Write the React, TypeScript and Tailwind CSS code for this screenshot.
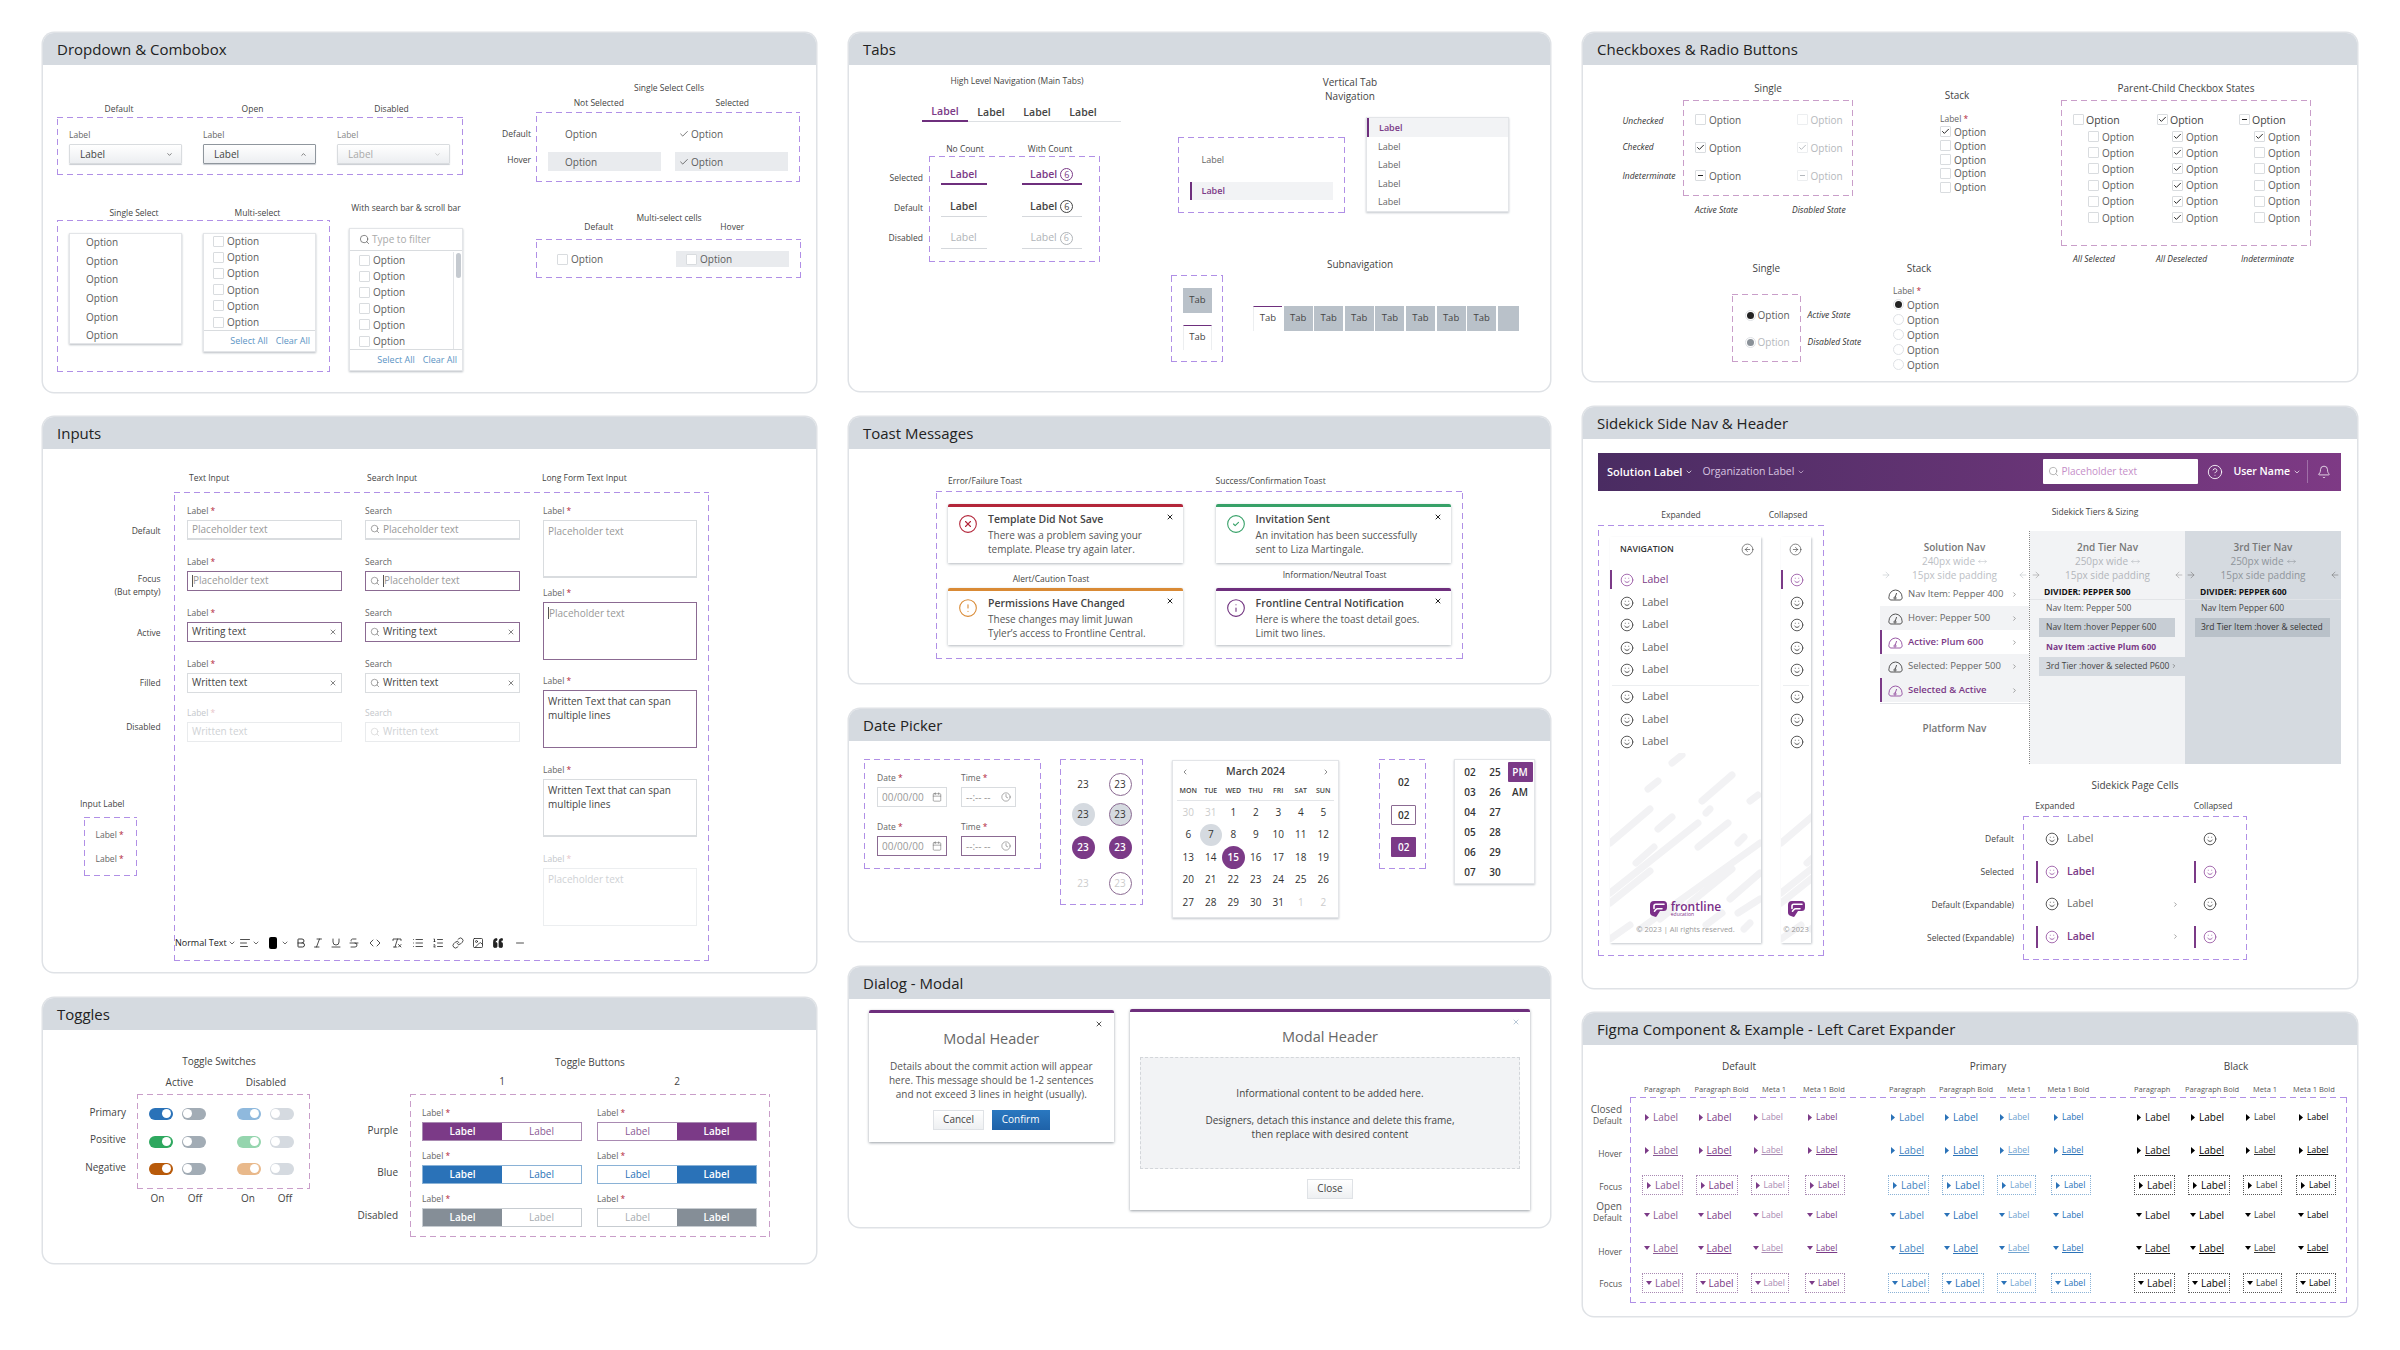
import React from "react";
import {
  AlignLeft, Bold, Bell, Calendar, Check, ChevronDown, ChevronLeft, ChevronRight, ChevronUp, CircleAlert,
  CircleArrowLeft, CircleArrowRight, CircleCheck, CircleHelp, CircleX, Clock, Code, Image, Info, Italic, Link,
  List, ListOrdered, Minus, MoveHorizontal, ArrowLeft, ArrowRight, Quote, RemoveFormatting, Search, Smile,
  Strikethrough, Underline, X,
} from "lucide-react";

const dash = "box-border border border-transparent bg-no-repeat [background-origin:border-box] [background-clip:border-box] bg-[repeating-linear-gradient(90deg,#b08fe6_0_6px,transparent_6px_10px),repeating-linear-gradient(90deg,#b08fe6_0_6px,transparent_6px_10px),repeating-linear-gradient(0deg,#b08fe6_0_6px,transparent_6px_10px),repeating-linear-gradient(0deg,#b08fe6_0_6px,transparent_6px_10px)] bg-[length:100%_1px,100%_1px,1px_100%,1px_100%] bg-[position:0_0,0_100%,0_0,100%_0]";
const dashPink = "box-border border border-transparent bg-no-repeat [background-origin:border-box] [background-clip:border-box] bg-[repeating-linear-gradient(90deg,#c99ec9_0_6px,transparent_6px_10px),repeating-linear-gradient(90deg,#c99ec9_0_6px,transparent_6px_10px),repeating-linear-gradient(0deg,#c99ec9_0_6px,transparent_6px_10px),repeating-linear-gradient(0deg,#c99ec9_0_6px,transparent_6px_10px)] bg-[length:100%_1px,100%_1px,1px_100%,1px_100%] bg-[position:0_0,0_100%,0_0,100%_0]";
const cap = "text-[8.5px] leading-[12px] text-[#444] whitespace-nowrap";
const capC = "text-[8.5px] leading-[12px] text-[#444] whitespace-nowrap text-center";
const head = "text-[10px] leading-[13px] text-[#444] whitespace-nowrap text-center";
const opt = "text-[10px] leading-[14px] text-[#5c5c5c] whitespace-nowrap";
const ital = "text-[8.5px] leading-[12px] italic text-[#333] whitespace-nowrap";

function Panel({ title, cls, children }: { title: string; cls: string; children: React.ReactNode }) {
  return (
    <section className={"w-full bg-white rounded-[11px] overflow-hidden ring-[1.5px] ring-[#dfe2e6] " + cls}>
      <div className="h-[32px] bg-[#d5dae0] flex items-center pl-[14px] pt-[1px] text-[15px] text-[#222] whitespace-nowrap">{title}</div>
      {children}
    </section>
  );
}

function Cb({ s, dim }: { s?: "c" | "i"; dim?: boolean }) {
  return (
    <span className={"w-[11px] h-[11px] shrink-0 bg-white rounded-[1px] border flex items-center justify-center " + (dim ? "border-[#eceef0]" : "border-[#d9dcdf]")}>
      {s === "c" && <Check size={9} strokeWidth={2.6} color={dim ? "#b4b8bd" : "#222"} />}
      {s === "i" && <span className={"w-[5px] h-[1.5px] " + (dim ? "bg-[#b4b8bd]" : "bg-[#222]")} />}
    </span>
  );
}

function CbOpt({ s, gap, bold, dim }: { s?: "c" | "i"; gap?: string; bold?: boolean; dim?: boolean }) {
  return (
    <div className={"flex items-center " + (gap || "gap-[3px]")}>
      <Cb s={s} dim={dim} />
      <span className={dim ? "text-[10px] leading-[14px] text-[#b5b8bc]" : bold ? "text-[10.5px] leading-[14px] text-[#444]" : opt}>Option</span>
    </div>
  );
}

function Sel({ label, icon, dim }: { label: string; icon: "d" | "u"; dim?: boolean }) {
  return (
    <div className="w-[113px]">
      <div className={"text-[8.5px] leading-[12px] mb-[3px] " + (dim ? "text-[#888]" : "text-[#666]")}>{label}</div>
      <div className={"h-[20px] flex items-center justify-between pl-[10px] pr-[8px] bg-gradient-to-b from-white to-[#eceef1] border rounded-[1px] shadow-[0_1px_1px_#c9cdd2] " + (icon === "u" ? "border-[#8f969d]" : "border-[#d9dcdf]")}>
        <span className={"text-[10px] " + (dim ? "text-[#aaa]" : "text-[#444]")}>{label}</span>
        {icon === "d" ? <ChevronDown size={7} strokeWidth={2.5} color={dim ? "#bbb" : "#555"} /> : <ChevronUp size={7} strokeWidth={2.5} color="#555" />}
      </div>
    </div>
  );
}

function SelectLinks() {
  return (
    <div className="flex items-center justify-end gap-[8px] pr-[5px] flex-1 border-t border-[#d9dcdf]">
      <span className="text-[9px] text-[#5b94c4]">Select All</span>
      <span className="text-[9px] text-[#5b94c4]">Clear All</span>
    </div>
  );
}

function Dropdown() {
  const single = [0, 1, 2, 3, 4, 5];
  return (
    <Panel title="Dropdown & Combobox" cls="h-[359px]">
      <div className="flex items-start">
        <div className="ml-[14px] w-[406px] shrink-0">
          <div className="flex mt-[38px]">
            <div className={capC + " w-[124px]"}>Default</div>
            <div className={capC + " w-[143px]"}>Open</div>
            <div className={capC + " w-[135px]"}>Disabled</div>
          </div>
          <div className={dash + " mt-[2px] h-[58px] pl-[11px] pt-[11px] flex gap-[21px]"}>
            <Sel label="Label" icon="d" />
            <Sel label="Label" icon="u" />
            <Sel label="Label" icon="d" dim />
          </div>
          <div className="flex items-start mt-[27px]">
            <div className="w-[272.5px] shrink-0">
              <div className="flex mt-[5px]">
                <div className={capC + " w-[154px]"}>Single Select</div>
                <div className={capC + " w-[93px]"}>Multi-select</div>
              </div>
              <div className={dash + " mt-[1px] h-[152px] pl-[11px] pt-[12px] flex gap-[21px] items-start"}>
                <div className="w-[113px] h-[111px] border border-[#e3e5e8] shadow-[0_1px_2px_#b9bec4] overflow-hidden">
                  {single.map((i) => (
                    <div key={i} className={opt + " h-[18.6px] flex items-center pl-[16px] " + (i === 0 ? "-mt-[1px]" : "")}>Option</div>
                  ))}
                </div>
                <div className="w-[113px] h-[119px] border border-[#e3e5e8] shadow-[0_1px_2px_#b9bec4] flex flex-col">
                  {single.map((i) => (
                    <div key={i} className={"h-[16.2px] flex items-center pl-[9px] " + (i === 0 ? "-mt-[1px]" : "")}><CbOpt /></div>
                  ))}
                  <SelectLinks />
                </div>
              </div>
            </div>
            <div className="ml-[19.5px] w-[114px] shrink-0">
              <div className={capC}>With search bar & scroll bar</div>
              <div className="mt-[14px] h-[143px] border border-[#e3e5e8] shadow-[0_1px_2px_#b9bec4] flex flex-col">
                <div className="h-[22px] shrink-0 flex items-center gap-[2px] pl-[9px] border-b border-[#d9dcdf]">
                  <Search size={11} strokeWidth={1.5} color="#555" />
                  <span className="text-[10px] text-[#aaa] whitespace-nowrap">Type to filter</span>
                </div>
                <div className="flex h-[98px] shrink-0 pt-[1px]">
                  <div className="flex-1">
                    {single.map((i) => (
                      <div key={i} className="h-[16.2px] flex items-center pl-[9px]"><CbOpt /></div>
                    ))}
                  </div>
                  <div className="w-[9px] border-l border-[#e3e5e8] pl-[2px] pt-[1px]">
                    <div className="w-[5px] h-[25px] rounded-[3px] bg-[#c5cad0]" />
                  </div>
                </div>
                <SelectLinks />
              </div>
            </div>
          </div>
        </div>
        <div className="ml-[28px] w-[312px] shrink-0">
          <div className={capC + " mt-[17px] pl-[45px] w-[311px]"}>Single Select Cells</div>
          <div className="flex pl-[45px] mt-[3px]">
            <div className={capC + " w-[126px]"}>Not Selected</div>
            <div className={capC + " w-[142px]"}>Selected</div>
          </div>
          <div className="flex mt-[3px]">
            <div className="w-[40px] mr-[5px] pt-[16px] text-right">
              <div className={cap}>Default</div>
              <div className={cap + " mt-[14px]"}>Hover</div>
            </div>
            <div className={dash + " w-[264px] h-[70px] pl-[11px] pt-[11.5px]"}>
              <div className="grid grid-cols-[113px_113px] gap-x-[14px] gap-y-[8.5px]">
                <div className={opt + " h-[19px] flex items-center pl-[17px]"}>Option</div>
                <div className={opt + " h-[19px] flex items-center pl-[4px] gap-[2px]"}><Check size={10} strokeWidth={1.6} color="#333" />Option</div>
                <div className={opt + " h-[19px] flex items-center pl-[17px] bg-[#e9ebee]"}>Option</div>
                <div className={opt + " h-[19px] flex items-center pl-[4px] gap-[2px] bg-[#e9ebee]"}><Check size={10} strokeWidth={1.6} color="#333" />Option</div>
              </div>
            </div>
          </div>
          <div className={capC + " mt-[30px] pl-[45px] w-[311px]"}>Multi-select cells</div>
          <div className="flex pl-[45px] mt-[-3px]">
            <div className={capC + " w-[126px]"}>Default</div>
            <div className={capC + " w-[142px]"}>Hover</div>
          </div>
          <div className={dash + " ml-[45px] mt-[6px] w-[265px] h-[39px] pt-[11px] flex"}>
            <div className="w-[139px] h-[16px] pl-[20px] flex items-center"><CbOpt /></div>
            <div className="w-[113px] h-[16px] pl-[10px] flex items-center bg-[#e9ebee]"><CbOpt /></div>
          </div>
        </div>
      </div>
    </Panel>
  );
}

function FieldLabel({ dim, text = "Label", star = true }: { dim?: boolean; text?: string; star?: boolean }) {
  return (
    <div className={"text-[8.5px] leading-[12px] whitespace-nowrap " + (dim ? "text-[#c4c7cb]" : "text-[#666]")}>
      {text}
      {star && <span className={dim ? "text-[#e8c4c8]" : "text-[#b3263a]"}> *</span>}
    </div>
  );
}

function Inp({ search, text, tone, clear, cursor }: { search?: boolean; text: string; tone: "def" | "foc" | "fil" | "dis"; clear?: boolean; cursor?: boolean }) {
  const b =
    tone === "foc"
      ? "border-[1.5px] border-[#8b6a92]"
      : tone === "def"
        ? "border border-[#d9dcdf] border-b-2"
        : tone === "fil"
          ? "border border-[#d9dcdf]"
          : "border border-[#e9ebed]";
  const c = tone === "dis" ? "text-[#cfd2d5]" : clear ? "text-[#444]" : "text-[#999]";
  return (
    <div className={"h-[20px] flex items-center pl-[4px] pr-[4px] " + b}>
      {search && <Search size={10} strokeWidth={1.4} color={tone === "dis" ? "#ccc" : "#666"} className="mr-[3px] shrink-0" />}
      {cursor && <span className="w-px h-[12px] bg-[#555]" />}
      <span className={"text-[10px] whitespace-nowrap flex-1 " + c}>{text}</span>
      {clear && <X size={8} strokeWidth={1.8} color="#333" />}
    </div>
  );
}

function Area({ lines, tone, cursor }: { lines: string[]; tone: "def" | "foc" | "dis" | "txt"; cursor?: boolean }) {
  const b = tone === "foc" ? "border-[1.5px] border-[#8b6a92]" : tone === "dis" ? "border border-[#eceef0]" : "border border-[#d9dcdf] border-b-2";
  const c = tone === "dis" ? "text-[#cfd2d5]" : tone === "txt" || lines.length > 1 ? "text-[#444]" : "text-[#999]";
  return (
    <div className={"h-[58px] pl-[4px] pt-[3px] " + b}>
      {lines.map((l) => (
        <div key={l} className={"text-[10px] leading-[14px] whitespace-nowrap flex items-center " + c}>
          {cursor && <span className="w-px h-[12px] bg-[#555]" />}
          {l}
        </div>
      ))}
    </div>
  );
}

function InputCol({ search, label }: { search?: boolean; label?: string }) {
  return (
    <div className="w-[155px] shrink-0">
      <FieldLabel text={label} star={!search} />
      <div className="mt-[2.5px]"><Inp search={search} text="Placeholder text" tone="def" /></div>
      <div className="mt-[16.5px]"><FieldLabel text={label} star={!search} /></div>
      <div className="mt-[2.5px]"><Inp search={search} text="Placeholder text" tone="foc" cursor /></div>
      <div className="mt-[16.5px]"><FieldLabel text={label} star={!search} /></div>
      <div className="mt-[2.5px]"><Inp search={search} text="Writing text" tone="foc" clear /></div>
      <div className="mt-[16.5px]"><FieldLabel text={label} star={!search} /></div>
      <div className="mt-[2.5px]"><Inp search={search} text="Written text" tone="fil" clear /></div>
      <div className="mt-[14px]"><FieldLabel dim text={label} star={!search} /></div>
      <div className="mt-[3px]"><Inp search={search} text="Written text" tone="dis" /></div>
    </div>
  );
}

function Inputs() {
  const long = ["Written Text that can span", "multiple lines"];
  return (
    <Panel title="Inputs" cls="h-[555px]">
      <div className="flex items-start">
        <div className="w-[131px] shrink-0">
          <div className="w-[117.6px] pt-[75px] text-right text-[8.5px] leading-[13px] text-[#444]">
            <div>Default</div>
            <div className="mt-[35px]">Focus</div>
            <div>(But empty)</div>
            <div className="mt-[28px]">Active</div>
            <div className="mt-[37px]">Filled</div>
            <div className="mt-[31px]">Disabled</div>
          </div>
          <div className={cap + " mt-[65px] ml-[37px]"}>Input Label</div>
          <div className={dash + " mt-[6.5px] ml-[40.5px] w-[53px] h-[59.5px] pl-[11px] pt-[11px]"}>
            <FieldLabel />
            <div className="mt-[12px]"><FieldLabel /></div>
          </div>
        </div>
        <div className="pt-[23px]">
          <div className={cap + " flex pl-[15px]"}>
            <div className="w-[178px]">Text Input</div>
            <div className="w-[175px]">Search Input</div>
            <div>Long Form Text Input</div>
          </div>
          <div className={dash + " mt-[8px] w-[535px] h-[469px]"}>
            <div className="flex items-start gap-[23px] pl-[12px] pt-[12px]">
              <InputCol />
              <InputCol search label="Search" />
              <div className="w-[154px] shrink-0">
                <FieldLabel />
                <div className="mt-[2.5px]"><Area lines={["Placeholder text"]} tone="def" /></div>
                <div className="mt-[9.5px]"><FieldLabel /></div>
                <div className="mt-[2.5px]"><Area lines={["Placeholder text"]} tone="foc" cursor /></div>
                <div className="mt-[15.5px]"><FieldLabel /></div>
                <div className="mt-[2.5px]"><Area lines={long} tone="foc" /></div>
                <div className="mt-[16.5px]"><FieldLabel /></div>
                <div className="mt-[2.5px]"><Area lines={long} tone="txt" /></div>
                <div className="mt-[16.5px]"><FieldLabel dim /></div>
                <div className="mt-[2.5px]"><Area lines={["Placeholder text"]} tone="dis" /></div>
              </div>
            </div>
            <div className="flex items-center h-[14px] mt-[10.5px] text-[#222]">
              <span className="text-[9px] w-[50px] whitespace-nowrap">Normal Text</span>
              <ChevronDown size={8} className="ml-[3px]" />
              <AlignLeft size={12} strokeWidth={1.6} className="ml-[3px]" />
              <ChevronDown size={8} className="ml-[1px]" />
              <span className="w-[8px] h-[12px] bg-black rounded-[2px] ml-[9px]" />
              <ChevronDown size={8} className="ml-[4px]" />
              <Bold size={12} strokeWidth={1.8} className="ml-[6px]" />
              <Italic size={12} strokeWidth={1.6} className="ml-[5px]" />
              <Underline size={12} strokeWidth={1.6} className="ml-[5.6px]" />
              <Strikethrough size={12} strokeWidth={1.6} className="ml-[6.4px]" />
              <Code size={12} strokeWidth={1.6} className="ml-[9px]" />
              <RemoveFormatting size={12} strokeWidth={1.6} className="ml-[10px]" />
              <List size={12} strokeWidth={1.6} className="ml-[9px]" />
              <ListOrdered size={12} strokeWidth={1.6} className="ml-[8px]" />
              <Link size={12} strokeWidth={1.6} className="ml-[8.5px]" />
              <Image size={12} strokeWidth={1.6} className="ml-[8px]" />
              <Quote size={12} strokeWidth={1.6} fill="#222" className="ml-[7.5px] rotate-180" />
              <Minus size={12} strokeWidth={1.6} className="ml-[10px]" />
            </div>
          </div>
        </div>
      </div>
    </Panel>
  );
}

function Sw({ on, bg }: { on?: boolean; bg: string }) {
  return (
    <div className={"w-[24px] h-[12px] rounded-full flex items-center px-[1.5px] " + bg + (on ? " justify-end" : " justify-start")}>
      <span className="w-[9px] h-[9px] rounded-full bg-white" />
    </div>
  );
}

function ToggleBtn({ a, b, first }: { a: string; b: string; first: boolean }) {
  return (
    <div className={"h-[19px] w-[160px] flex text-[10px] border " + b}>
      <div className={"w-1/2 flex items-center justify-center " + (first ? a : "bg-white")}><BtnText on={first} a={a} /></div>
      <div className={"w-1/2 flex items-center justify-center " + (!first ? a : "bg-white")}><BtnText on={!first} a={a} /></div>
    </div>
  );
}
function BtnText({ on, a }: { on: boolean; a: string }) {
  const off = a.includes("7b3a87") ? "text-[#8a5a94]" : a.includes("2a72b8") ? "text-[#2a72b8]" : "text-[#a6abb0]";
  return <span className={on ? "text-white font-semibold" : off}>Label</span>;
}

function Toggles() {
  const rows = [
    ["bg-[#7b3a87]", "border-[#a98ab2]"],
    ["bg-[#2a72b8]", "border-[#8ab2d6]"],
    ["bg-[#858e97]", "border-[#c7ccd1]"],
  ];
  return (
    <Panel title="Toggles" cls="h-[265px]">
      <div className="flex items-start">
        <div className="w-[267px] shrink-0 pt-[25px]">
          <div className={head + " ml-[93px] w-[166px]"}>Toggle Switches</div>
          <div className="flex ml-[93px] mt-[8px]">
            <div className={head + " w-[87px]"}>Active</div>
            <div className={head + " w-[86px]"}>Disabled</div>
          </div>
          <div className="flex mt-[4.5px]">
            <div className="w-[83px] text-right text-[10px] leading-[13px] text-[#444] pt-[12.5px]">
              <div>Primary</div>
              <div className="mt-[14px]">Positive</div>
              <div className="mt-[15px]">Negative</div>
            </div>
            <div className={dashPink + " ml-[10.6px] w-[173px] h-[95px] pl-[11.4px] pt-[13px]"}>
              <div className="flex"><Sw on bg="bg-[#2a72b8]" /><div className="ml-[9px]"><Sw bg="bg-[#a2acb5]" /></div><div className="ml-[31px]"><Sw on bg="bg-[#8fb9dd]" /></div><div className="ml-[9px]"><Sw bg="bg-[#d5dae0]" /></div></div>
              <div className="flex mt-[16px]"><Sw on bg="bg-[#2ea85f]" /><div className="ml-[9px]"><Sw bg="bg-[#a2acb5]" /></div><div className="ml-[31px]"><Sw on bg="bg-[#95d5ae]" /></div><div className="ml-[9px]"><Sw bg="bg-[#d5dae0]" /></div></div>
              <div className="flex mt-[15px]"><Sw on bg="bg-[#b85a0a]" /><div className="ml-[9px]"><Sw bg="bg-[#a2acb5]" /></div><div className="ml-[31px]"><Sw on bg="bg-[#e9b98b]" /></div><div className="ml-[9px]"><Sw bg="bg-[#d5dae0]" /></div></div>
            </div>
          </div>
          <div className="flex ml-[104.5px] mt-[3.5px]">
            <div className={head + " w-[20px]"}>On</div>
            <div className={head + " w-[20px] ml-[17.5px]"}>Off</div>
            <div className={head + " w-[20px] ml-[33px]"}>On</div>
            <div className={head + " w-[20px] ml-[17px]"}>Off</div>
          </div>
        </div>
        <div className="pt-[26px]">
          <div className={head + " ml-[100px] w-[360px]"}>Toggle Buttons</div>
          <div className="flex ml-[112px] mt-[6px]">
            <div className={head + " w-[160px]"}>1</div>
            <div className={head + " w-[160px] ml-[15px]"}>2</div>
          </div>
          <div className="flex mt-[5.5px]">
            <div className="w-[88px] text-right text-[10px] leading-[13px] text-[#444] pt-[30.5px]">
              <div>Purple</div>
              <div className="mt-[29px]">Blue</div>
              <div className="mt-[30px]">Disabled</div>
            </div>
            <div className={dashPink + " ml-[12px] w-[360px] h-[143px] pl-[11px] pt-[12px]"}>
              {rows.map(([a, b], i) => (
                <div key={a} className={"flex gap-[15px] " + (i ? "mt-[9px]" : "")}>
                  <div><FieldLabel /><div className="mt-[3px]"><ToggleBtn a={a} b={b} first /></div></div>
                  <div><FieldLabel /><div className="mt-[3px]"><ToggleBtn a={a} b={b} first={false} /></div></div>
                </div>
              ))}
            </div>
          </div>
        </div>
      </div>
    </Panel>
  );
}

function Count({ c }: { c: string }) {
  return <span className={"w-[13px] h-[13px] rounded-full border flex items-center justify-center text-[9px] ml-[3px] font-normal " + c}>6</span>;
}

function Tabs() {
  return (
    <Panel title="Tabs" cls="h-[358px]">
      <div className="flex items-start">
        <div className="w-[322px] shrink-0 pt-[10px]">
          <div className={capC + " ml-[73px] w-[190px]"}>High Level Navigation (Main Tabs)</div>
          <div className="ml-[73px] w-[199px] mt-[17px] flex border-b-[1.5px] border-[#dde0e3] text-[10.5px] font-semibold text-[#444]">
            <div className="w-[46px] h-[18px] flex items-center justify-center border-b-2 border-[#6e2f7d] -mb-[1.5px] text-[#7b3a87]">Label</div>
            <div className="w-[46px] h-[17px] flex items-center justify-center">Label</div>
            <div className="w-[46px] h-[17px] flex items-center justify-center">Label</div>
            <div className="w-[46px] h-[17px] flex items-center justify-center">Label</div>
          </div>
          <div className="flex ml-[79px] mt-[21px]">
            <div className={capC + " w-[74px]"}>No Count</div>
            <div className={capC + " w-[96px]"}>With Count</div>
          </div>
          <div className="flex mt-[1px]">
            <div className={cap + " w-[74px] text-right pt-[16px]"}>
              <div>Selected</div>
              <div className="mt-[18px]">Default</div>
              <div className="mt-[18px]">Disabled</div>
            </div>
            <div className={dash + " ml-[5.6px] w-[171.4px] h-[106px] pl-[11px] pt-[9px] text-[10.5px] font-semibold"}>
              <div className="flex gap-[35px]">
                <div className="w-[46px] h-[19px] flex items-center justify-center border-b-2 border-[#6e2f7d] text-[#7b3a87]">Label</div>
                <div className="w-[60px] h-[19px] flex items-center justify-center border-b-2 border-[#6e2f7d] text-[#7b3a87]">Label<Count c="border-[#7b3a87]" /></div>
              </div>
              <div className="flex gap-[35px] mt-[12px]">
                <div className="w-[46px] h-[20px] flex items-center justify-center border-b border-[#d5d8dc] text-[#444]">Label</div>
                <div className="w-[60px] h-[20px] flex items-center justify-center border-b border-[#d5d8dc] text-[#444]">Label<Count c="border-[#444]" /></div>
              </div>
              <div className="flex gap-[35px] mt-[11px]">
                <div className="w-[46px] h-[21px] flex items-center justify-center border-b border-[#d5d8dc] text-[#b0b4b8] font-normal">Label</div>
                <div className="w-[60px] h-[21px] flex items-center justify-center border-b border-[#d5d8dc] text-[#b0b4b8] font-normal">Label<Count c="border-[#b0b4b8]" /></div>
              </div>
            </div>
          </div>
        </div>
        <div className="pt-[10px]">
          <div className={head + " w-[358px] leading-[14px]"}>Vertical Tab<br />Navigation</div>
          <div className="flex items-start">
            <div className={dash + " ml-[6.5px] mt-[34px] w-[167px] h-[76px] pl-[11px] pt-[13px] text-[9px]"}>
              <div className="h-[18px] flex items-center pl-[12px] text-[#666]">Label</div>
              <div className="h-[18px] w-[143px] mt-[13px] flex items-center pl-[10px] border-l-2 border-[#6e2f7d] bg-[#f2f3f5] text-[#7b3a87] font-semibold">Label</div>
            </div>
            <div className="ml-[21.5px] mt-[14px] w-[142.5px] h-[95px] border border-[#e3e5e8] shadow-[0_1px_2px_#c4c8cd] text-[9px] text-[#666]">
              <div className="h-[19px] flex items-center pl-[10px] border-l-2 border-[#6e2f7d] bg-[#f2f3f5] text-[#7b3a87] font-semibold">Label</div>
              <div className="h-[18.6px] flex items-center pl-[11px]">Label</div>
              <div className="h-[18.6px] flex items-center pl-[11px]">Label</div>
              <div className="h-[18.6px] flex items-center pl-[11px]">Label</div>
              <div className="h-[18.6px] flex items-center pl-[11px]">Label</div>
            </div>
          </div>
          <div className={head + " mt-[45px] w-[378px]"}>Subnavigation</div>
          <div className="flex items-start mt-[3.5px]">
            <div className={dash + " w-[52px] h-[87px] pl-[11px] pt-[12px] text-[9.5px] text-[#444]"}>
              <div className="w-[29px] h-[25px] bg-[#b9c1c9] flex items-center justify-center">Tab</div>
              <div className="w-[29px] h-[25px] mt-[12px] border-t border-t-[#6e2f7d] border-x border-x-[#eceef0] flex items-center justify-center">Tab</div>
            </div>
            <div className="ml-[30px] mt-[31px] flex gap-[1.6px] text-[9.5px] text-[#444]">
              <div className="w-[29px] h-[25px] border-t border-t-[#6e2f7d] border-l border-l-[#eceef0] flex items-center justify-center">Tab</div>
              {[0, 1, 2, 3, 4, 5, 6].map((i) => (
                <div key={i} className="w-[29px] h-[25px] bg-[#b9c1c9] flex items-center justify-center">Tab</div>
              ))}
              <div className="w-[21.5px] h-[25px] bg-[#b9c1c9]" />
            </div>
          </div>
        </div>
      </div>
    </Panel>
  );
}

function Toast({ bar, icon, title, lines, h }: { bar: string; icon: React.ReactNode; title: string; lines: string[]; h: string }) {
  return (
    <div className={"w-[235px] bg-white border-t-[3px] rounded-t-[2px] shadow-[0_1px_3px_#b4b9bf] flex items-start " + bar + " " + h}>
      <div className="ml-[10px] mt-[7px] w-[20px] h-[20px] shrink-0">{icon}</div>
      <div className="ml-[10px] pt-[5px]">
        <div className="text-[10.5px] leading-[14px] font-semibold text-[#444] whitespace-nowrap">{title}</div>
        <div className="mt-[2px] text-[10px] leading-[14px] text-[#555] whitespace-nowrap">
          {lines.map((l) => (<div key={l}>{l}</div>))}
        </div>
      </div>
      <X size={8} strokeWidth={3} color="#222" className="ml-auto mr-[9px] mt-[6px] shrink-0" />
    </div>
  );
}

function Toasts() {
  return (
    <Panel title="Toast Messages" cls="h-[266px]">
      <div className="ml-[86.5px] pt-[26px]">
        <div className={cap + " flex pl-[12.5px]"}>
          <div className="w-[267.6px]">Error/Failure Toast</div>
          <div>Success/Confirmation Toast</div>
        </div>
        <div className={dash + " mt-[4px] w-[527.5px] h-[168px] pl-[11.5px] pt-[12px] flex gap-[32.6px]"}>
          <div>
            <Toast h="h-[59px]" bar="border-[#b3263a]" icon={<CircleX size={20} strokeWidth={1.3} color="#b3263a" />} title="Template Did Not Save" lines={["There was a problem saving your", "template. Please try again later."]} />
            <div className={capC + " mt-[10px] w-[206px]"}>Alert/Caution Toast</div>
            <div className="mt-[3px]">
              <Toast h="h-[57px]" bar="border-[#d98a35]" icon={<CircleAlert size={20} strokeWidth={1.3} color="#d98a35" />} title="Permissions Have Changed" lines={["These changes may limit Juwan", "Tyler’s access to Frontline Central."]} />
            </div>
          </div>
          <div>
            <Toast h="h-[59px]" bar="border-[#37a168]" icon={<CircleCheck size={20} strokeWidth={1.3} color="#37a168" />} title="Invitation Sent" lines={["An invitation has been successfully", "sent to Liza Martingale."]} />
            <div className={capC + " mt-[6px] w-[238px]"}>Information/Neutral Toast</div>
            <div className="mt-[7px]">
              <Toast h="h-[57px]" bar="border-[#6e2f7d]" icon={<Info size={20} strokeWidth={1.3} color="#6e2f7d" />} title="Frontline Central Notification" lines={["Here is where the toast detail goes.", "Limit two lines."]} />
            </div>
          </div>
        </div>
      </div>
    </Panel>
  );
}

function DateCell({ w, b, t, icon }: { w: string; b: string; t: string; icon: React.ReactNode }) {
  return (
    <div className={"h-[20px] flex items-center justify-between pl-[4px] pr-[4px] " + w + " " + b}>
      <span className="text-[10px] text-[#999] whitespace-nowrap">{t}</span>
      {icon}
    </div>
  );
}

function DateField({ b, first }: { b: string; first: boolean }) {
  return (
    <div className={"flex gap-[14px] " + (first ? "" : "mt-[14px]")}>
      <div>
        <FieldLabel text="Date" />
        <div className="mt-[3px]"><DateCell w="w-[70px]" b={b} t="00/00/00" icon={<Calendar size={10} strokeWidth={1.3} color="#666" />} /></div>
      </div>
      <div>
        <FieldLabel text="Time" />
        <div className="mt-[3px]"><DateCell w="w-[55px]" b={b} t="--:-- --" icon={<Clock size={10} strokeWidth={1.3} color="#666" />} /></div>
      </div>
    </div>
  );
}

function Circle({ c }: { c: string }) {
  return <div className={"w-[23px] h-[23px] rounded-full flex items-center justify-center text-[10px] " + c}>23</div>;
}

function DatePicker() {
  const cal = [
    ["30", "31", "1", "2", "3", "4", "5"],
    ["6", "7", "8", "9", "10", "11", "12"],
    ["13", "14", "15", "16", "17", "18", "19"],
    ["20", "21", "22", "23", "24", "25", "26"],
    ["27", "28", "29", "30", "31", "1", "2"],
  ];
  const hours = [["02", "25", "PM"], ["03", "26", "AM"], ["04", "27", ""], ["05", "28", ""], ["06", "29", ""], ["07", "30", ""]];
  return (
    <Panel title="Date Picker" cls="h-[232px]">
      <div className="flex items-start pl-[15px] pt-[18px]">
        <div className={dash + " w-[177px] h-[110px] pl-[12px] pt-[12px]"}>
          <DateField b="border border-[#d9dcdf]" first />
          <DateField b="border-[1.5px] border-[#8b6a92]" first={false} />
        </div>
        <div className={dash + " ml-[18.5px] w-[83.5px] h-[146px] pl-[11px] pt-[12.5px] grid grid-cols-[23px_23px] gap-x-[14px] content-start"}>
          <Circle c="text-[#333]" />
          <Circle c="border border-[#8b6a92] text-[#333]" />
          <Circle c="mt-[7px] bg-[#d5dae0] text-[#333]" />
          <Circle c="mt-[7px] bg-[#d5dae0] border border-[#8b6a92] text-[#333]" />
          <Circle c="mt-[10px] bg-[#7b3a87] text-white font-semibold" />
          <Circle c="mt-[10px] bg-[#7b3a87] text-white font-semibold" />
          <Circle c="mt-[13px] text-[#ccc]" />
          <Circle c="mt-[13px] border border-[#8b6a92] text-[#ccc]" />
        </div>
        <div className="ml-[29px] mt-[1px] w-[167px] h-[158px] border border-[#e3e5e8] shadow-[0_1px_2px_#c4c8cd]">
          <div className="mt-[3px] h-[16px] flex items-center justify-between px-[8px] text-[10.5px] font-semibold text-[#444]">
            <ChevronLeft size={8} color="#555" />
            March 2024
            <ChevronRight size={8} color="#555" />
          </div>
          <div className="mt-[5px] mx-[4px] grid grid-cols-[repeat(7,22.5px)] h-[16px] pb-[4px] text-[7px] leading-[12px] font-semibold text-center text-[#444] border-b border-[#e3e5e8]">
            {["MON", "TUE", "WED", "THU", "FRI", "SAT", "SUN"].map((d) => (<div key={d}>{d}</div>))}
          </div>
          <div className="mx-[4px] grid grid-cols-[repeat(7,22.5px)] text-[10px] text-[#333]">
            {cal.flatMap((r, i) =>
              r.map((d, j) => {
                const out = (i === 0 && j < 2) || (i === 4 && j > 4);
                const k = d === "7" ? "bg-[#d5dae0] rounded-full" : d === "15" ? "bg-[#7b3a87] rounded-full text-white font-semibold" : out ? "text-[#ccc]" : "";
                return <div key={i + "-" + j} className={"h-[22.5px] flex items-center justify-center " + k}>{d}</div>;
              })
            )}
          </div>
        </div>
        <div className={dash + " ml-[40px] w-[47px] h-[110px] pl-[11.4px] pt-[12px] text-[10px] font-semibold text-[#333]"}>
          <div className="w-[24.6px] h-[20px] flex items-center justify-center">02</div>
          <div className="w-[24.6px] h-[20px] mt-[13px] flex items-center justify-center border border-[#8b6a92] rounded-[1px]">02</div>
          <div className="w-[24.6px] h-[20px] mt-[12px] flex items-center justify-center bg-[#7b3a87] rounded-[1px] text-white">02</div>
        </div>
        <div className="ml-[28px] w-[81px] h-[125px] border border-[#e3e5e8] shadow-[0_1px_2px_#c4c8cd] pl-[2.5px] pt-[2px] grid grid-cols-[25px_25px_25px] content-start text-[10px] font-semibold text-[#333]">
          {hours.flat().map((t, i) => (
            <div key={i} className={"h-[20px] flex items-center justify-center " + (t === "PM" ? "bg-[#7b3a87] text-white rounded-[1px]" : "")}>{t}</div>
          ))}
        </div>
      </div>
    </Panel>
  );
}

function Btn({ t, w, blue }: { t: string; w: string; blue?: boolean }) {
  return (
    <div className={"h-[20px] flex items-center justify-center text-[10px] " + w + (blue ? " bg-gradient-to-b from-[#2a78c0] to-[#1f62a8] text-white" : " bg-gradient-to-b from-white to-[#eef0f2] border border-[#dfe2e6] text-[#444]")}>{t}</div>
  );
}

function Dialog() {
  return (
    <Panel title="Dialog - Modal" cls="h-[260px]">
      <div className="flex items-start pl-[20px]">
        <div className="mt-[11px] w-[244.6px] h-[132px] border-t-[3.5px] border-[#6e2f7d] rounded-t-[2px] shadow-[0_1px_3px_#9aa0a6] pt-[6.5px] text-center">
          <div className="flex justify-end pr-[10.6px]"><X size={8} strokeWidth={3} color="#555" /></div>
          <div className="mt-[1px] text-[14.5px] leading-[20px] text-[#666]">Modal Header</div>
          <div className="mt-[10px] text-[10px] leading-[14px] text-[#555] whitespace-nowrap">
            Details about the commit action will appear<br />here. This message should be 1-2 sentences<br />and not exceed 3 lines in height (usually).
          </div>
          <div className="mt-[9px] flex justify-center gap-[7.5px]">
            <Btn t="Cancel" w="w-[51px]" />
            <Btn t="Confirm" w="w-[58px]" blue />
          </div>
        </div>
        <div className="ml-[16.4px] mt-[10px] w-[400px] h-[201px] border-t-[3.5px] border-[#6e2f7d] rounded-t-[2px] shadow-[0_1px_3px_#9aa0a6] pt-[5.5px] text-center">
          <div className="flex justify-end pr-[10px]"><X size={8} strokeWidth={3} color="#b9c8d6" /></div>
          <div className="mt-[1px] text-[14.5px] leading-[20px] text-[#666]">Modal Header</div>
          <div className="mt-[10px] mx-[10px] h-[112px] bg-[#f2f3f5] border border-dashed border-[#d3d6da] pt-[28px] text-[10px] leading-[14px] text-[#444]">
            <div>Informational content to be added here.</div>
            <div className="mt-[13px]">Designers, detach this instance and delete this frame,<br />then replace with desired content</div>
          </div>
          <div className="mt-[10px] flex justify-center"><Btn t="Close" w="w-[46px]" /></div>
        </div>
      </div>
    </Panel>
  );
}

function Radio({ on, dim }: { on?: boolean; dim?: boolean }) {
  return (
    <span className="w-[11px] h-[11px] shrink-0 rounded-full border border-[#dfe2e6] flex items-center justify-center">
      {on && <span className={"w-[7px] h-[7px] rounded-full " + (dim ? "bg-[#8a9198]" : "bg-[#222]")} />}
    </span>
  );
}

function Checks() {
  const child = [0, 1, 2, 3, 4, 5];
  return (
    <Panel title="Checkboxes & Radio Buttons" cls="h-[348px]">
      <div className="flex items-start">
        <div className="w-[478px] shrink-0">
          <div className="flex items-start">
            <div className="w-[270px] shrink-0 pt-[16.5px]">
              <div className={head + " ml-[100px] w-[170px]"}>Single</div>
              <div className="flex mt-[5.5px]">
                <div className={ital + " w-[100px] pl-[39.5px] pt-[15px]"}>
                  <div>Unchecked</div>
                  <div className="mt-[14px]">Checked</div>
                  <div className="mt-[17px]">Indeterminate</div>
                </div>
                <div className={dashPink + " w-[170px] h-[96px] pl-[11px] pt-[11.5px] grid grid-cols-[101.5px_60px] gap-y-[14px] content-start"}>
                  <CbOpt /><CbOpt dim />
                  <CbOpt s="c" /><CbOpt s="c" dim />
                  <CbOpt s="i" /><CbOpt s="i" dim />
                </div>
              </div>
              <div className={ital + " flex mt-[8px] ml-[112px]"}>
                <div className="w-[97px]">Active State</div>
                <div>Disabled State</div>
              </div>
            </div>
            <div className="ml-[87px] pt-[23.5px]">
              <div className={head + " ml-[-7px] w-[48px]"}>Stack</div>
              <div className="mt-[11.5px]"><FieldLabel /></div>
              <div className="flex flex-col"><div className="h-[13.8px] flex items-center"><CbOpt s="c" /></div><div className="h-[13.8px] flex items-center"><CbOpt /></div><div className="h-[13.8px] flex items-center"><CbOpt /></div><div className="h-[13.8px] flex items-center"><CbOpt /></div><div className="h-[13.8px] flex items-center"><CbOpt /></div></div>
            </div>
          </div>
          <div className="flex items-start mt-[45.5px]">
            <div className="ml-[149px] w-[68.6px] shrink-0">
              <div className={head}>Single</div>
              <div className={dashPink + " mt-[19.5px] h-[68px] pl-[11.5px] pt-[13px]"}>
                <div className="flex items-center gap-[2px] h-[14px]"><Radio on /><span className={opt}>Option</span></div>
                <div className="flex items-center gap-[2px] h-[14px] mt-[13px]"><Radio on dim /><span className="text-[10px] text-[#b5b8bc]">Option</span></div>
              </div>
            </div>
            <div className={ital + " ml-[7px] pt-[47px] w-[85.4px] shrink-0"}>
              <div>Active State</div>
              <div className="mt-[15px]">Disabled State</div>
            </div>
            <div>
              <div className={head + " w-[52px]"}>Stack</div>
              <div className="mt-[10.5px]"><FieldLabel /></div>
              {[true, false, false, false, false].map((on, i) => (
                <div key={i} className="h-[15px] flex items-center gap-[3px]"><Radio on={on} /><span className={opt}>Option</span></div>
              ))}
            </div>
          </div>
        </div>
        <div className="pt-[16.5px] w-[250px] shrink-0">
          <div className={head}>Parent-Child Checkbox States</div>
          <div className={dashPink + " mt-[5.5px] h-[146px] pl-[11px] pt-[11.5px] flex"}>
            <div className="w-[84px]">
              <div className="h-[16px] flex items-start"><CbOpt gap="gap-[2px]" bold /></div>
              {child.map((i) => (<div key={i} className="h-[16.2px] flex items-center pl-[15px]"><CbOpt /></div>))}
            </div>
            <div className="w-[82px]">
              <div className="h-[16px] flex items-start"><CbOpt s="c" gap="gap-[2px]" bold /></div>
              {child.map((i) => (<div key={i} className="h-[16.2px] flex items-center pl-[15px]"><CbOpt s="c" /></div>))}
            </div>
            <div>
              <div className="h-[16px] flex items-start"><CbOpt s="i" gap="gap-[2px]" bold /></div>
              {child.map((i) => (<div key={i} className="h-[16.2px] flex items-center pl-[15px]"><CbOpt s={i === 0 ? "c" : undefined} /></div>))}
            </div>
          </div>
          <div className={ital + " flex mt-[7px] pl-[12px]"}>
            <div className="w-[83px]">All Selected</div>
            <div className="w-[85px]">All Deselected</div>
            <div>Indeterminate</div>
          </div>
        </div>
      </div>
    </Panel>
  );
}

function Gauge({ c }: { c: string }) {
  return (
    <svg width="15" height="13" viewBox="0 0 15 13" fill="none" stroke={c} strokeWidth="1" className="shrink-0">
      <path d="M3 12h9a2.3 2.3 0 0 0 2-3.2A6.8 6.8 0 0 0 7.5 2 6.8 6.8 0 0 0 1 8.8 2.3 2.3 0 0 0 3 12z" />
      <path d="M8.6 5L7.2 9.2" />
      <circle cx="7" cy="10" r="1.1" />
    </svg>
  );
}

function Pattern() {
  const lines: number[][] = [
    [72, 2, 62, 10], [48, 28, 38, 36], [122, 22, 92, 48], [40, 56, 0, 90], [88, 70, 0, 140], [62, 64, 48, 76],
    [118, 70, 88, 94], [148, 42, 140, 48], [150, 90, 30, 176], [122, 116, 80, 150], [150, 120, 120, 146],
    [40, 118, 0, 150], [150, 146, 128, 160], [70, 150, 50, 166], [100, 56, 96, 60], [134, 84, 128, 90], [112, 160, 96, 172],
    [44, 94, 26, 110], [20, 172, 0, 186], [140, 170, 134, 176],
  ];
  return (
    <svg className="absolute left-0 bottom-0 pointer-events-none" width="151" height="190" viewBox="0 0 151 190" fill="none" stroke="#f2f2f4" strokeWidth="7" strokeLinecap="round">
      {lines.map((l, i) => (<line key={i} x1={l[0]} y1={l[1]} x2={l[2]} y2={l[3]} />))}
    </svg>
  );
}

function Logo() {
  return (
    <svg width="17" height="16" viewBox="0 0 17 16" className="shrink-0">
      <path d="M4 0h9.5A3.5 3.5 0 0 1 17 3.5v3A3.5 3.5 0 0 1 13.500 10H10l-3.500 5.500C6 16 5.500 16 5 15.800L3 15A3.500 3.500 0 0 1 0 11.500V4a4 4 0 0 1 4-4z" fill="#7b2f88" />
      <path d="M4 7.500V5a1.800 1.800 0 0 1 1.800-1.800H14M4.500 10.200L6 8.500a2 2 0 0 1 1.500-.7H12" fill="none" stroke="#fff" strokeWidth="1.600" strokeLinecap="round" />
    </svg>
  );
}

function NavRow({ active, collapsed }: { active?: boolean; collapsed?: boolean }) {
  const c = active ? "#9a5aa6" : "#444";
  return (
    <div className={"h-[22.5px] flex items-center " + (collapsed ? "pl-[9px]" : "pl-[10px]") + (active ? " relative" : "")}>
      {active && <span className="absolute left-0 top-[1px] h-[19px] w-[2px] bg-[#7b3a87]" />}
      <Smile size={14} strokeWidth={1.5} color={c} />
      {!collapsed && <span className={"ml-[8px] text-[10.5px] " + (active ? "text-[#7b3a87]" : "text-[#666]")}>Label</span>}
    </div>
  );
}

function SideNav({ collapsed }: { collapsed?: boolean }) {
  const a = [0, 1, 2, 3, 4];
  const b = [0, 1, 2];
  return (
    <div className={"relative h-[406px] overflow-hidden shadow-[1px_1px_2px_#c4c8cd] flex flex-col " + (collapsed ? "w-[30px]" : "w-[151px]")}>
      <Pattern />
      <div className={"h-[25px] mb-[7px] flex items-center justify-between relative " + (collapsed ? "pl-[8px]" : "pl-[10px] pr-[7px]")}>
        {!collapsed && <span className="text-[8.7px] font-semibold text-[#333]">NAVIGATION</span>}
        {collapsed ? <CircleArrowRight size={13} strokeWidth={1.2} color="#444" /> : <CircleArrowLeft size={13} strokeWidth={1.2} color="#444" />}
      </div>
      <div className="relative">
        {a.map((i) => (<NavRow key={i} active={i === 0} collapsed={collapsed} />))}
        <div className="h-[5px] mb-[0.5px] border-b border-[#eceef0] mx-[2px] -mt-[1px]" />
        {b.map((i) => (<NavRow key={i} collapsed={collapsed} />))}
      </div>
      {collapsed ? (
        <div className="relative mt-auto pb-[8px] flex flex-col items-center">
          <Logo />
          <div className="mt-[6px] text-[7.5px] leading-[12px] text-[#999] whitespace-nowrap">© 2023</div>
        </div>
      ) : (
        <div className="relative mt-auto pb-[8px] flex flex-col items-center">
          <div className="flex items-center gap-[4px]">
            <Logo />
            <div className="leading-none">
              <div className="text-[12px] leading-[11px] font-semibold text-[#7b2f88]">frontline</div>
              <div className="text-[5px] leading-[5px] text-[#7b2f88]">education</div>
            </div>
          </div>
          <div className="mt-[6px] text-[7.5px] leading-[12px] text-[#999] whitespace-nowrap">© 2023 | All rights reserved.</div>
        </div>
      )}
    </div>
  );
}

function TierHead({ title, text, left, right }: { title: string; text: string; left: string; right: string }) {
  return (
    <div className="pt-[10px]">
      <div className="text-[10px] leading-[13px] font-semibold text-[#777] text-center">{title}</div>
      <div className={"text-[10px] leading-[14px] text-center flex items-center justify-center gap-[3px] " + left}>{text}<MoveHorizontal size={9} strokeWidth={1.4} /></div>
      <div className={"h-[14px] flex items-center justify-between text-[10px] px-[1px] whitespace-nowrap " + left}>
        <ArrowRight size={10} strokeWidth={1.4} className={right} />
        <span>15px side padding</span>
        <ArrowLeft size={10} strokeWidth={1.4} className={right} />
      </div>
    </div>
  );
}

function TierItem({ t, bg, bar, purple }: { t: string; bg?: string; bar?: boolean; purple?: boolean }) {
  return (
    <div className={"h-[24px] flex items-center " + (bg || "") + (bar ? " border-l-2 border-[#7b3a87] pl-[6px]" : " pl-[8px]")}>
      <Gauge c={purple ? "#9a5aa6" : "#555"} />
      <span className={"ml-[5px] text-[9.5px] whitespace-nowrap " + (purple ? "text-[#7b3a87] font-semibold" : "text-[#666]")}>{t}</span>
      <ChevronRight size={7} strokeWidth={2} color="#666" className="ml-auto mr-[11px]" />
    </div>
  );
}

function CellRow({ sel, exp }: { sel?: boolean; exp?: boolean }) {
  const c = sel ? "#9a5aa6" : "#444";
  return (
    <div className="h-[22px] flex items-center">
      <div className="w-[156px] h-full flex items-center shrink-0">
        <span className={"w-[2px] h-full " + (sel ? "bg-[#7b3a87]" : "")} />
        <Smile size={14} strokeWidth={1.5} color={c} className="ml-[7px]" />
        <span className={"ml-[8px] text-[10.5px] " + (sel ? "text-[#7b3a87] font-semibold" : "text-[#666]")}>Label</span>
        {exp && <ChevronRight size={7} strokeWidth={2} color="#666" className="ml-auto mr-[13px]" />}
      </div>
      <span className={"ml-[1.7px] w-[2px] h-full " + (sel ? "bg-[#7b3a87]" : "")} />
      <Smile size={14} strokeWidth={1.5} color={c} className="ml-[7.300px]" />
    </div>
  );
}

function Sidekick() {
  return (
    <Panel title="Sidekick Side Nav & Header" cls="h-[581px]">
      <div className="pl-[15px] pt-[14px]">
        <div className="w-[743px] h-[37.5px] bg-gradient-to-r from-[#4a2c62] to-[#7e3a85] flex items-center pl-[9px] text-white whitespace-nowrap">
          <span className="text-[11px] font-semibold">Solution Label</span>
          <ChevronDown size={8} strokeWidth={2} className="ml-[3px]" />
          <span className="ml-[9px] text-[10.5px] text-[#d8c4e0]">Organization Label</span>
          <ChevronDown size={8} strokeWidth={2} className="ml-[3px]" color="#d8c4e0" />
          <div className="ml-auto w-[155px] h-[25px] bg-white rounded-[1px] flex items-center pl-[5px] gap-[2px]">
            <Search size={11} strokeWidth={1.5} color="#999" />
            <span className="text-[10px] text-[#c58ec8]">Placeholder text</span>
          </div>
          <CircleHelp size={16} strokeWidth={1.3} className="ml-[9px]" />
          <span className="ml-[10px] text-[10.5px] font-semibold">User Name</span>
          <ChevronDown size={8} strokeWidth={2} className="ml-[3px]" />
          <span className="ml-[6px] w-px h-[23px] bg-[#a070a8]" />
          <Bell size={14} strokeWidth={1.3} className="ml-[9px] mr-[10px]" />
        </div>
        <div className="flex items-start">
          <div className="w-[226px] shrink-0 pt-[18.5px]">
            <div className="flex">
              <div className={capC + " w-[166px]"}>Expanded</div>
              <div className={capC + " w-[48px]"}>Collapsed</div>
            </div>
            <div className={dash + " mt-[4px] h-[431px] pl-[11px] pt-[11px] flex gap-[20px]"}>
              <SideNav />
              <SideNav collapsed />
            </div>
          </div>
          <div className="ml-[56px] pt-[15.5px]">
            <div className={capC + " w-[430px]"}>Sidekick Tiers & Sizing</div>
            <div className="mt-[13px] flex h-[233px] w-[461px]">
              <div className="w-[150px] border-r border-dotted border-[#888] shrink-0">
                <TierHead title="Solution Nav" text="240px wide" left="text-[#bcc0c5]" right="text-[#c0c4c9]" />
                <TierItem t="Nav Item: Pepper 400" />
                <TierItem t="Hover: Pepper 500" bg="bg-[#f2f3f5]" />
                <TierItem t="Active: Plum 600" bar purple />
                <TierItem t="Selected: Pepper 500" bg="bg-[#f2f3f5]" />
                <TierItem t="Selected & Active" bg="bg-[#f2f3f5]" bar purple />
                <div className="h-px bg-[#e3e5e8] mt-[1px]" />
                <div className="mt-[18px] text-center text-[10px] leading-[13px] font-semibold text-[#777]">Platform Nav</div>
              </div>
              <div className="w-[155px] bg-[#f2f3f5] shrink-0">
                <TierHead title="2nd Tier Nav" text="250px wide" left="text-[#b2b6bb]" right="text-[#999]" />
                <div className="mt-[4px] h-[14px] pl-[14px] border-b border-[#e3e5e8] text-[8.5px] leading-[12px] font-bold text-[#111] whitespace-nowrap">DIVIDER: PEPPER 500</div>
                <div className="h-[17.500px] pl-[16px] flex items-center text-[8.5px] text-[#555] whitespace-nowrap">Nav Item: Pepper 500</div>
                <div className="h-[19.500px] ml-[9px] w-[136px] pl-[7px] flex items-center bg-[#c8ced5] text-[8.5px] text-[#444] whitespace-nowrap">Nav Item :hover Pepper 600</div>
                <div className="h-[20px] pl-[16px] flex items-center text-[8.5px] font-bold text-[#7b3a87] whitespace-nowrap">Nav Item :active Plum 600</div>
                <div className="h-[18.500px] ml-[9px] pl-[7px] flex items-center bg-[#d5dae0] text-[8.5px] text-[#444] whitespace-nowrap">3rd Tier :hover & selected P600<ChevronRight size={6} strokeWidth={2} className="ml-auto mr-[8px]" /></div>
              </div>
              <div className="w-[156px] bg-[#d5dae0] shrink-0">
                <TierHead title="3rd Tier Nav" text="250px wide" left="text-[#8f959b]" right="text-[#777]" />
                <div className="mt-[4px] h-[14px] pl-[15px] border-b border-[#e0e3e7] text-[8.5px] leading-[12px] font-bold text-[#111] whitespace-nowrap">DIVIDER: PEPPER 600</div>
                <div className="h-[17.500px] pl-[16px] flex items-center text-[8.5px] text-[#444] whitespace-nowrap">Nav Item Pepper 600</div>
                <div className="h-[19.500px] ml-[10px] w-[135px] pl-[6px] flex items-center bg-[#b9c1c9] text-[8.5px] text-[#333] whitespace-nowrap">3rd Tier Item :hover & selected</div>
              </div>
            </div>
            <div className="text-[10px] leading-[12px] text-[#444] whitespace-nowrap text-center mt-[15px] ml-[143px] w-[224px]">Sidekick Page Cells</div>
            <div className="flex ml-[143px] mt-[9px]">
              <div className={capC + " w-[64px]"}>Expanded</div>
              <div className={capC + " w-[48px] ml-[102px]"}>Collapsed</div>
            </div>
            <div className="flex mt-[3.5px]">
              <div className={cap + " w-[134px] text-right pt-[17.5px]"}>
                <div>Default</div>
                <div className="mt-[21px]">Selected</div>
                <div className="mt-[21px]">Default (Expandable)</div>
                <div className="mt-[21px]">Selected (Expandable)</div>
              </div>
              <div className={dash + " ml-[9px] w-[224px] h-[144.5px] pl-[12px] pt-[11.5px] flex flex-col gap-[10.5px]"}>
                <CellRow />
                <CellRow sel />
                <CellRow exp />
                <CellRow sel exp />
              </div>
            </div>
          </div>
        </div>
      </div>
    </Panel>
  );
}

function Caret({ open, c }: { open?: boolean; c: string }) {
  return open ? (
    <svg width="6" height="4" viewBox="0 0 6 4" className="shrink-0"><polygon points="0,0 6,0 3,4" fill={c} /></svg>
  ) : (
    <svg width="4" height="7" viewBox="0 0 4 7" className="shrink-0 mx-[1px]"><polygon points="0,0 4,3.500 0,7" fill={c} /></svg>
  );
}

type Tone = { c: string; lite: string; bold: string; box: string; hex: string };
const tones: Tone[] = [
  { c: "text-[#8a5a94]", lite: "text-[#a98ab2]", bold: "text-[#7b3a87] font-medium", box: "border-[#a98ab2]", hex: "#7b3a87" },
  { c: "text-[#3f82c0]", lite: "text-[#6fa3d0]", bold: "text-[#2a72b8] font-medium", box: "border-[#8ab2d6]", hex: "#2a72b8" },
  { c: "text-[#111]", lite: "text-[#333]", bold: "text-black font-medium", box: "border-[#555]", hex: "#000" },
];
const boxW = ["w-[41px]", "w-[42px]", "w-[38.500px]", "w-[39.500px]"];

function Exp({ t, i, open, mode }: { t: Tone; i: number; open?: boolean; mode: "n" | "h" | "f" }) {
  const meta = i >= 2;
  const bold = i % 2 === 1;
  const color = bold ? t.bold : meta ? t.lite : t.c;
  const inner = (
    <span className="flex items-center gap-[3px]">
      <Caret open={open} c={t.hex} />
      <span className={(meta ? "text-[8.5px] " : "text-[10px] ") + color + (mode === "h" ? " underline underline-offset-1 decoration-[0.5px]" : "")}>Label</span>
    </span>
  );
  if (mode === "f") {
    return <div className={"-ml-[2px] h-[20px] flex items-center pl-[3px] border border-dotted " + t.box + " " + boxW[i]}>{inner}</div>;
  }
  return <div className="h-[20px] flex items-center">{inner}</div>;
}

function FigmaPanel() {
  const cols = [0, 1, 2, 3];
  const rows: { open?: boolean; mode: "n" | "h" | "f"; mt: string }[] = [
    { mode: "n", mt: "" },
    { mode: "h", mt: "mt-[13px]" },
    { mode: "f", mt: "mt-[15px]" },
    { open: true, mode: "n", mt: "mt-[10px]" },
    { open: true, mode: "h", mt: "mt-[13px]" },
    { open: true, mode: "f", mt: "mt-[15px]" },
  ];
  const hdr = ["Paragraph", "Paragraph Bold", "Meta 1", "Meta 1 Bold"];
  return (
    <Panel title="Figma Component & Example - Left Caret Expander" cls="h-[303px]">
      <div className="pt-[14.5px]">
        <div className="flex ml-[47px]">
          <div className={head + " w-[218px]"}>Default</div>
          <div className={head + " w-[280px]"}>Primary</div>
          <div className={head + " w-[216px]"}>Black</div>
        </div>
        <div className="ml-[61px] mt-[10.5px] grid grid-cols-[50.5px_67.5px_41px_86px_50px_68px_40.5px_86.5px_51px_68px_40px_50px] text-[7.5px] leading-[12px] text-[#555] whitespace-nowrap">
          {[0, 1, 2].flatMap((g) => hdr.map((h) => <div key={g + h}>{h}</div>))}
        </div>
        <div className="flex mt-[2px]">
          <div className="w-[39px] shrink-0 text-right text-[8.5px] leading-[12px] text-[#555] pt-[6px]">
            <div className="text-[10px]">Closed</div>
            <div>Default</div>
            <div className="mt-[21px]">Hover</div>
            <div className="mt-[21px]">Focus</div>
            <div className="mt-[8px] h-[11px] text-[10px] leading-[11px]">Open</div>
            <div>Default</div>
            <div className="mt-[22px]">Hover</div>
            <div className="mt-[20px]">Focus</div>
          </div>
          <div className={dash + " ml-[8px] w-[716.5px] h-[206px] pl-[13px] pt-[9px]"}>
            {rows.map((r, ri) => (
              <div key={ri} className={"grid grid-cols-[53.5px_55px_54.5px_83px_54px_55px_54px_83px_54px_55px_53px_48px] " + r.mt}>
                {tones.flatMap((t, ti) => cols.map((i) => <Exp key={ti + "-" + i} t={t} i={i} open={r.open} mode={r.mode} />))}
              </div>
            ))}
          </div>
        </div>
      </div>
    </Panel>
  );
}

export default function App() {
  return (
    <div className="w-[2400px] h-[1350px] bg-white overflow-hidden flex items-start gap-[33px] pl-[43px] pt-[33px] [font-family:'Open_Sans',sans-serif] text-[#333]">
      <div className="w-[773px] shrink-0 flex flex-col gap-[25px]">
        <Dropdown />
        <Inputs />
        <div className="mt-[1px]"><Toggles /></div>
      </div>
      <div className="w-[701px] shrink-0 flex flex-col gap-[26px]">
        <Tabs />
        <Toasts />
        <DatePicker />
        <Dialog />
      </div>
      <div className="w-[774px] shrink-0 flex flex-col gap-[26px]">
        <Checks />
        <Sidekick />
        <div className="-mt-[1px]"><FigmaPanel /></div>
      </div>
    </div>
  );
}
